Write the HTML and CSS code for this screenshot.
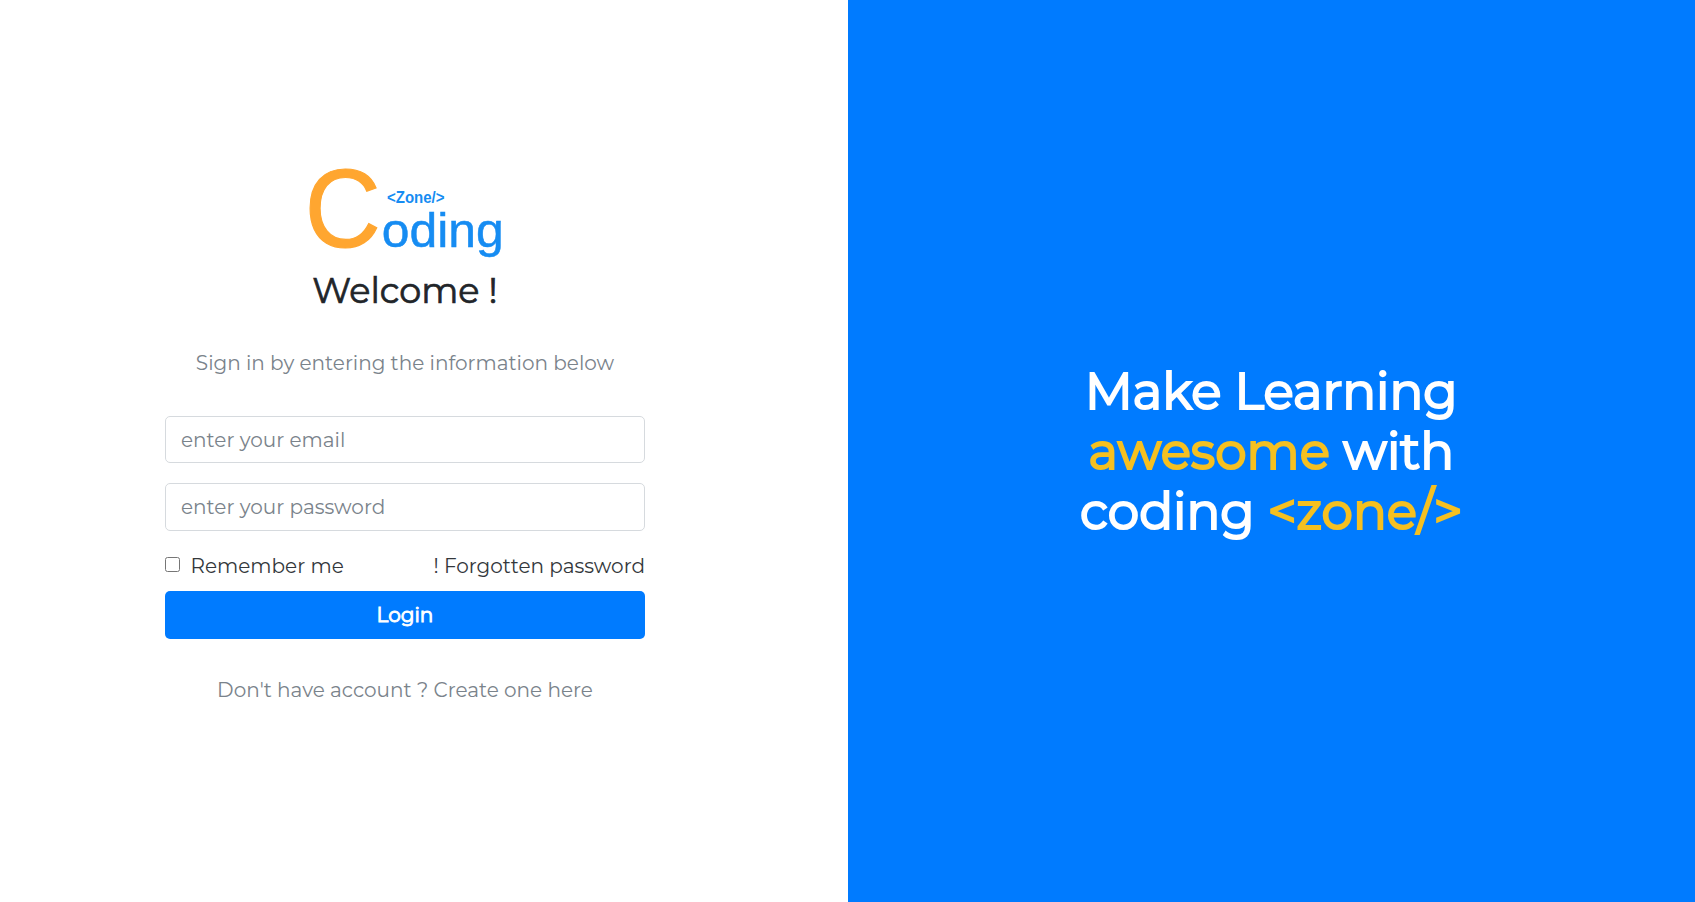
FILE: index.html
```html
<!DOCTYPE html>
<html lang="en">
<head>
<meta charset="utf-8">
<title>Coding Zone</title>
<link rel="stylesheet" href="styles.css">
</head>
<body>
<main class="page">
  <section class="signin">
    <form class="form">
      <svg class="logo" width="200" height="100" viewBox="0 0 200 100" role="img" aria-label="Coding Zone">
        <text class="logo-c" x="-2.2" y="86" textLength="76" lengthAdjust="spacingAndGlyphs">C</text>
        <text class="logo-zone" x="80" y="42" textLength="57.5" lengthAdjust="spacingAndGlyphs">&lt;Zone/&gt;</text>
        <text class="logo-oding" x="74.8" y="86" textLength="122" lengthAdjust="spacingAndGlyphs">oding</text>
      </svg>
      <h1 class="welcome">Welcome !</h1>
      <p class="lead">Sign in by entering the information below</p>
      <input class="field email" type="text" placeholder="enter your email">
      <input class="field password" type="password" placeholder="enter your password">
      <div class="options">
        <label class="remember"><input class="check" type="checkbox"><span>Remember me</span></label>
        <a class="forgot">! Forgotten password</a>
      </div>
      <button class="login" type="button">Login</button>
      <p class="signup">Don't have account ? Create one here</p>
    </form>
  </section>
  <section class="promo">
    <h2 class="slogan">
      <span class="line">Make Learning</span>
      <span class="line"><span class="gold">awesome</span> with</span>
      <span class="line">coding <span class="gold">&lt;zone/&gt;</span></span>
    </h2>
  </section>
</main>
</body>
</html>
```
FILE: styles.css
```css
* { box-sizing: border-box; }
body {
  margin: 0;
  font-family: Montserrat, Inter, sans-serif;
  font-size: 20px;
  font-weight: 400;
  line-height: 30px;
  color: #212529;
  background: #fff;
}
.page { display: grid; grid-template-columns: 1fr 1fr; height: 902px; overflow: hidden; }
.signin { padding: 161px 0 0 165px; }
.form { display: flex; flex-direction: column; width: 480px; }
.logo { display: block; margin-left: 142px; overflow: visible; }
.logo text { font-family: "Liberation Sans", Arial, sans-serif; }
.logo-c { font-size: 111px; fill: #ffa630; stroke: #ffa630; stroke-width: 1.2px; }
.logo-zone { font-size: 16px; font-weight: 700; fill: #168cf2; }
.logo-oding { font-size: 49px; fill: #168cf2; stroke: #168cf2; stroke-width: 0.5px; }
.welcome { margin: 8px 0 0; font-size: 35px; font-weight: 400; line-height: 44px; text-align: center; white-space: nowrap; -webkit-text-stroke: 0.7px; }
.lead { margin: 35px 0 0; text-align: center; color: #7a838b; white-space: nowrap; }
.field {
  width: 480px;
  height: 47.5px;
  padding: 1px 15px 0;
  border: 1px solid #d6dade;
  border-radius: 5px;
  font: inherit;
  background: #fff;
}
.field::placeholder { color: #7a838b; opacity: 1; }
.email { margin-top: 37.5px; }
.password { margin-top: 20px; }
.options { display: flex; justify-content: space-between; margin-top: 20px; height: 40.5px; color: #33373b; white-space: nowrap; }
.remember { display: flex; }
.check { width: 15px; height: 15px; margin: 6px 10.5px 0 0; }
.login { height: 47.5px; padding: 0; border: 0; border-radius: 5px; background: #007bff; color: #fff; font: inherit; -webkit-text-stroke: 0.9px; }
.signup { margin: 36px 0 0; text-align: center; color: #7a838b; white-space: nowrap; }
.promo { background: #007bff; color: #fff; padding-top: 362px; }
.slogan { margin: 0; font-size: 50px; font-weight: 400; line-height: 60px; text-align: center; -webkit-text-stroke: 2.1px; }
.line { display: block; white-space: nowrap; }
.gold { color: #f5c021; }
```
